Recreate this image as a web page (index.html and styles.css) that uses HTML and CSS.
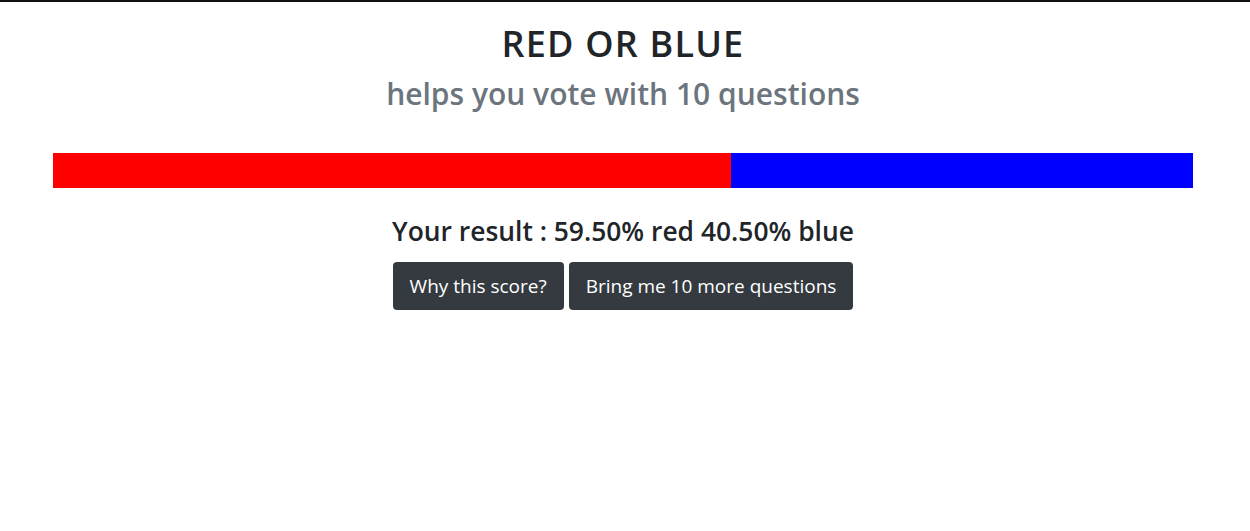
FILE: index.html
```html
<!DOCTYPE html>
<html lang="en">
<head>
<meta charset="utf-8">
<title>Red or Blue</title>
<link rel="stylesheet" href="styles.css">
</head>
<body>
<div class="container">
  <h1 class="title">RED OR BLUE</h1>
  <h2 class="subtitle">helps you vote with 10 questions</h2>
  <div class="bar">
    <div class="bar-red" style="width: 59.5%"></div>
    <div class="bar-blue" style="width: 40.5%"></div>
  </div>
  <h3 class="result">Your result : 59.50% red 40.50% blue</h3>
  <div class="actions">
    <button class="btn">Why this score?</button>
    <button class="btn">Bring me 10 more questions</button>
  </div>
</div>
</body>
</html>
```

FILE: styles.css
```css
html, body {
  margin: 0;
  padding: 0;
  background: #fff;
}
body {
  border-top: 2px solid #111;
  padding-right: 4px;
  font-family: "Open Sans", "Noto Sans", sans-serif;
  color: #212529;
}
.container {
  width: 1140px;
  margin: 0 auto;
  text-align: center;
}
.title {
  margin: 22px 0 0;
  font-size: 36px;
  line-height: 40px;
  letter-spacing: 1.2px;
  font-weight: 600;
  color: #212529;
}
.subtitle {
  margin: 12px 0 0;
  font-size: 30px;
  line-height: 36px;
  font-weight: 600;
  color: #6c757d;
}
.bar {
  display: flex;
  height: 35px;
  margin-top: 41px;
}
.bar-red { background: #ff0000; }
.bar-blue { background: #0000ff; }
.result {
  margin: 27px 0 0;
  font-size: 26.4px;
  line-height: 32px;
  font-weight: 600;
  color: #212529;
}
.actions {
  display: flex;
  justify-content: center;
  gap: 5px;
  margin-top: 15px;
}
.btn {
  font-family: inherit;
  font-size: 19px;
  line-height: 24px;
  padding: 12px 17px;
  border: 0;
  border-radius: 4px;
  background: #343a40;
  color: #fff;
  cursor: pointer;
}
```
